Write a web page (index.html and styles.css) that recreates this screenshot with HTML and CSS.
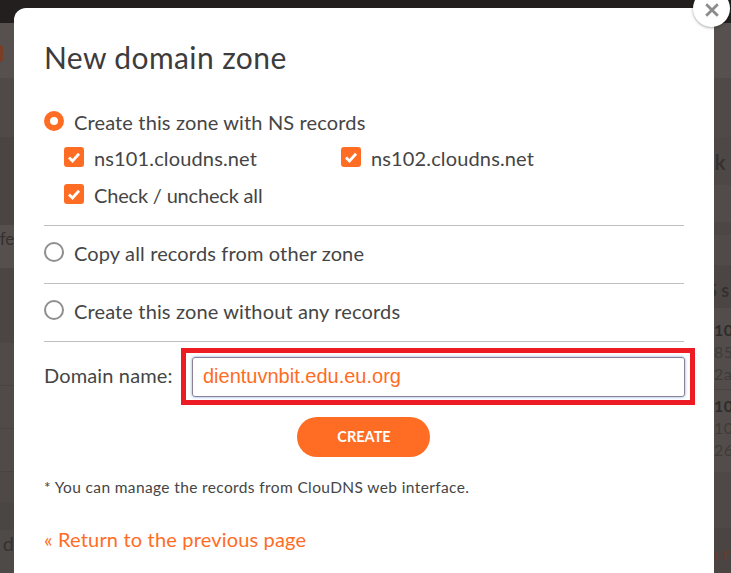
FILE: index.html
```html
<!DOCTYPE html>
<html lang="en">
<head>
<meta charset="utf-8">
<title>New domain zone</title>
<link rel="stylesheet" href="styles.css">
</head>
<body>
<div class="page">
  <div class="topbar"></div>
  <div class="column column-left">
    <div class="band l1"><span class="orange-tab"></span></div>
    <div class="band l2"></div>
    <div class="band l3"></div>
    <div class="band l4">sfe</div>
    <div class="band l5"></div>
    <div class="band l6"></div>
    <div class="band l6"></div>
    <div class="band l6"></div>
    <div class="band l7"></div>
    <div class="band l8"></div>
    <div class="band l9">d</div>
  </div>
  <div class="column column-right">
    <div class="band l1"></div>
    <div class="band l2"></div>
    <div class="band r3"><b>ck</b></div>
    <div class="band r4"></div>
    <div class="band r5"></div>
    <div class="band r6"></div>
    <div class="band r7"><b>S s</b></div>
    <div class="band r8"><b>10</b><br>85<br>2a</div>
    <div class="band r9"><b>10</b><br>10<br>26</div>
    <div class="band r10"></div>
    <div class="band r11">n r</div>
  </div>
</div>

<section class="modal">
  <h1 class="title">New domain zone</h1>

  <div class="group">
    <label class="option"><span class="radio on"></span>Create this zone with NS records</label>
    <div class="checks">
      <label class="check"><span class="box"><svg viewBox="0 0 20 20" width="20" height="20"><path d="M5 10.500l3.500 3.500L15 6.800" fill="none" stroke="#fff" stroke-width="2.800"/></svg></span>ns101.cloudns.net</label>
      <label class="check"><span class="box"><svg viewBox="0 0 20 20" width="20" height="20"><path d="M5 10.500l3.500 3.500L15 6.800" fill="none" stroke="#fff" stroke-width="2.800"/></svg></span>ns102.cloudns.net</label>
      <label class="check check-all"><span class="box"><svg viewBox="0 0 20 20" width="20" height="20"><path d="M5 10.500l3.500 3.500L15 6.800" fill="none" stroke="#fff" stroke-width="2.800"/></svg></span>Check / uncheck all</label>
    </div>
  </div>

  <div class="group single">
    <label class="option"><span class="radio"></span>Copy all records from other zone</label>
  </div>
  <div class="group single">
    <label class="option"><span class="radio"></span>Create this zone without any records</label>
  </div>

  <div class="domain-row">
    <label class="domain-label">Domain name:</label>
    <div class="highlight"><div class="input">dientuvnbit.edu.eu.org</div></div>
  </div>

  <div class="actions"><button class="create">CREATE</button></div>

  <p class="note">* You can manage the records from ClouDNS web interface.</p>
  <a class="back">« Return to the previous page</a>
</section>

<div class="close"><svg viewBox="0 0 16 16" width="16" height="16"><path d="M2.200 2.200l11.600 11.600M13.800 2.200L2.200 13.800" stroke="#8c8c8c" stroke-width="2.800" fill="none"/></svg></div>
</body>
</html>
```
FILE: styles.css
```css
* { box-sizing: border-box; }
html, body { margin: 0; height: 100%; overflow: hidden; }
body { font-family: "Lato", "Noto Sans", sans-serif; color: #454545; background: #4f4a48; }

/* dimmed page behind the dialog */
.page {
  display: grid; grid-template-columns: 365px 366px; grid-template-rows: 23px 550px;
  height: 573px; overflow: hidden; color: #353130; font-size: 18px; line-height: 22px;
}
.topbar { grid-column: 1 / 3; background: #231f1f; }
.column { overflow: hidden; }
.column-left .band { display: flex; justify-content: flex-end; padding-right: 351px; white-space: nowrap; }
.column-right .band { padding-left: 349px; white-space: nowrap; }
.band { overflow: visible; }

.l1 { height: 55px; background: #56514f; }
.l2 { height: 59px; background: #4f4a48; }
.l3 { height: 88px; background: #4a4542; }
.l4 { height: 43px; background: #55504e; padding-top: 3px; font-size: 17px; letter-spacing: -.2px; }
.l5 { height: 75px; background: #4b4643; }
.l6 { height: 43px; background: #504b49; border-bottom: 1px solid #494442; }
.l7 { height: 30px; background: #4e4947; }
.l8 { height: 28px; background: #4a4644; }
.l9 { height: 43px; background: #4e4a48; padding-top: 2px; font-size: 20px; }
.orange-tab { position: absolute; left: 0; top: 45px; width: 3px; height: 17px; background: #7a3d26; border-radius: 0 3px 3px 0; }

.r3 { height: 48px; background: #4d4845; padding-top: 14px; font-size: 20px; }
.column-right .r3 { padding-left: 340px; }
.r4 { height: 37px; background: #514c4a; }
.r5 { height: 13px; background: #4c4744; }
.r6 { height: 30px; background: #504b49; }
.r7 { height: 43px; background: #4b4643; padding-top: 14px; }
.column-right .r7 { padding-left: 342px; }
.r8 { height: 82px; background: #524d4b; padding-top: 11px; border-bottom: 1px solid #494442; font-size: 16px; letter-spacing: .5px; color: #3f3b39; }
.r9 { height: 82px; background: #524d4b; padding-top: 5px; font-size: 16px; letter-spacing: .5px; color: #3f3b39; }
.r8 b, .r9 b { color: #2f2b2a; }
.r10 { height: 56px; background: #4e4947; }
.r11 { height: 45px; background: #4a4543; padding-top: 14px; color: #6b3a2c; }
.column-right .r11 { padding-left: 343px; }

/* dialog */
.modal {
  position: absolute; left: 14px; top: 8px; width: 700px; height: 565px;
  background: #fff; border-radius: 12px 12px 0 0; padding: 29px 30px 0;
}
.title { margin: 0 0 33px; font-weight: 400; font-size: 30px; line-height: 40px; color: #3c3c3c; letter-spacing: .4px; }

.group { border-bottom: 1px solid #bfbfbf; padding-bottom: 20px; }
.single { padding-top: 15px; height: 58px; }
.option { display: flex; align-items: center; font-size: 20px; line-height: 24px; height: 24px; letter-spacing: .14px; }
.radio { width: 20px; height: 20px; border-radius: 50%; border: 2px solid #8f8f8f; margin-right: 10px; margin-top: -2px; background: #fff; flex: none; }
.radio.on { border: 6px solid #ff6c24; }

.checks { display: grid; grid-template-columns: 277px 1fr; row-gap: 17px; padding: 14px 0 0 20px; }
.check { display: flex; align-items: center; font-size: 20px; line-height: 24px; height: 20px; letter-spacing: .14px; }
.check-all { letter-spacing: -.18px; }
.box { width: 20px; height: 20px; border-radius: 3px; background: #ff6c24; margin: -2px 10px 0 0; flex: none; display: block; }
.box svg { display: block; }

.domain-row { display: flex; align-items: center; margin-top: 6px; height: 57px; }
.domain-label { font-size: 20px; letter-spacing: .14px; width: 137px; flex: none; margin-top: -4px; }
.highlight { border: 5px solid #ed1c24; padding: 4px 5px 3px 6px; width: 514px; height: 57px; flex: none; background: #fff; }
.input {
  height: 40px; border: 1px solid #8c7f96; border-radius: 3px; box-shadow: 0 0 3px #7da7e8;
  font-family: "Liberation Sans", Arial, sans-serif; font-size: 20px; line-height: 36px; padding-left: 10px; color: #ff6c24;
}

.actions { display: flex; justify-content: center; margin-top: 12px; padding-right: 2px; }
.create {
  width: 133px; height: 40px; border: 0; border-radius: 20px; background: #ff6c24; color: #fff; padding: 0 0 2px 2px;
  font-family: inherit; font-weight: 700; font-size: 14.500px;
}
.note { margin: 20px 0 0; font-size: 15.500px; line-height: 20px; letter-spacing: .37px; color: #454545; }
.back { display: block; margin-top: 29px; font-size: 20px; line-height: 26px; color: #ff6c24; letter-spacing: .17px; }

.close {
  position: absolute; left: 693px; top: -10px; width: 37px; height: 37px; border-radius: 50%;
  background: #fff; box-shadow: 0 1px 3px rgba(0,0,0,.35);
  display: flex; align-items: center; justify-content: center; padding-top: 3px;
}
.close svg { display: block; }
```
